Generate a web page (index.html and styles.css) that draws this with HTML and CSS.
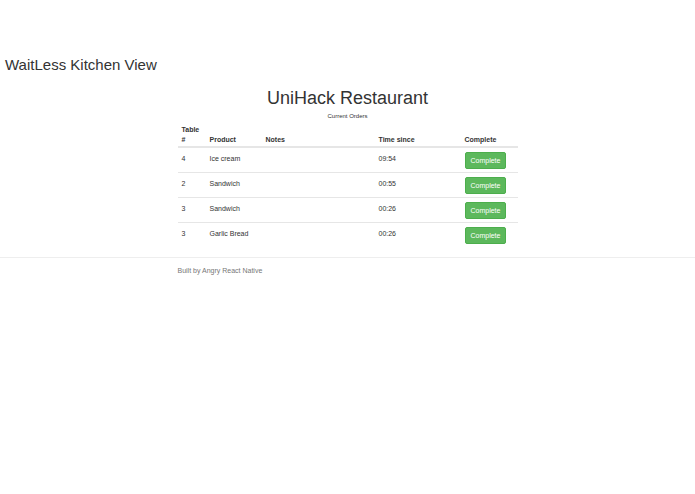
FILE: index.html
```html
<!DOCTYPE html>
<html lang="en">
<head>
    <meta charset="UTF-8">
    <meta name="viewport" content="width=device-width, initial-scale=1.0">
    <title>WaitLess Kitchen View</title>
    <link rel="stylesheet" href="styles.css">
</head>
<body>
    <header class="navbar">
        <h3 class="brand">WaitLess Kitchen View</h3>
    </header>

    <main class="container">
        <h1 class="restaurant">UniHack Restaurant</h1>
        <p class="subtitle">Current Orders</p>

        <table class="orders">
            <thead>
                <tr>
                    <th class="col-table">Table #</th>
                    <th class="col-product">Product</th>
                    <th class="col-notes">Notes</th>
                    <th class="col-time">Time since</th>
                    <th class="col-complete">Complete</th>
                </tr>
            </thead>
            <tbody>
                <tr>
                    <td>4</td>
                    <td>Ice cream</td>
                    <td></td>
                    <td>09:54</td>
                    <td><button class="btn-complete">Complete</button></td>
                </tr>
                <tr>
                    <td>2</td>
                    <td>Sandwich</td>
                    <td></td>
                    <td>00:55</td>
                    <td><button class="btn-complete">Complete</button></td>
                </tr>
                <tr>
                    <td>3</td>
                    <td>Sandwich</td>
                    <td></td>
                    <td>00:26</td>
                    <td><button class="btn-complete">Complete</button></td>
                </tr>
                <tr>
                    <td>3</td>
                    <td>Garlic Bread</td>
                    <td></td>
                    <td>00:26</td>
                    <td><button class="btn-complete">Complete</button></td>
                </tr>
            </tbody>
        </table>
    </main>

    <footer class="footer">
        <div class="container">
            <p class="credit">Built by Angry React Native</p>
        </div>
    </footer>
</body>
</html>
```

FILE: styles.css
```css
body {
    font-family: 'Liberation Sans', Arial, sans-serif;
    font-size: 7px;
    line-height: 10px;
    color: #333;
    background-color: #fff;
    margin: 0;
}

.navbar {
    padding: 57px 5px 0;
}

.brand {
    font-size: 15px;
    line-height: 16.5px;
    font-weight: normal;
    margin: 0;
}

.container {
    width: 340px;
    margin: 0 auto;
}

.restaurant {
    font-size: 18px;
    line-height: 20px;
    font-weight: normal;
    text-align: center;
    margin: 14px 0 0;
}

.subtitle {
    font-size: 6px;
    line-height: 9px;
    text-align: center;
    margin: 4px 0 0;
}

.orders {
    width: 100%;
    border-collapse: collapse;
    table-layout: fixed;
}

.orders th,
.orders td {
    padding: 4px 4px 3px;
    text-align: left;
    vertical-align: top;
}

.orders th {
    font-weight: bold;
    vertical-align: bottom;
    padding-bottom: 1px;
    border-bottom: 2px solid #e6e6e6;
}

.orders td {
    line-height: 13px;
    border-top: 1px solid #e6e6e6;
}

.orders tbody tr:first-child td {
    border-top: none;
}

.col-table { width: 20px; }
.col-product { width: 48px; }
.col-notes { width: 105px; }
.col-time { width: 78px; }

.btn-complete {
    display: block;
    font-family: inherit;
    font-size: 7px;
    line-height: 9px;
    color: #fff;
    background-color: #5cb85c;
    border: 1px solid #4cae4c;
    border-radius: 2px;
    padding: 3px 5px;
    cursor: pointer;
}

.footer {
    border-top: 1px solid #eee;
    margin-top: 10px;
    padding-top: 8px;
}

.credit {
    color: #777;
    margin: 0;
}
```
